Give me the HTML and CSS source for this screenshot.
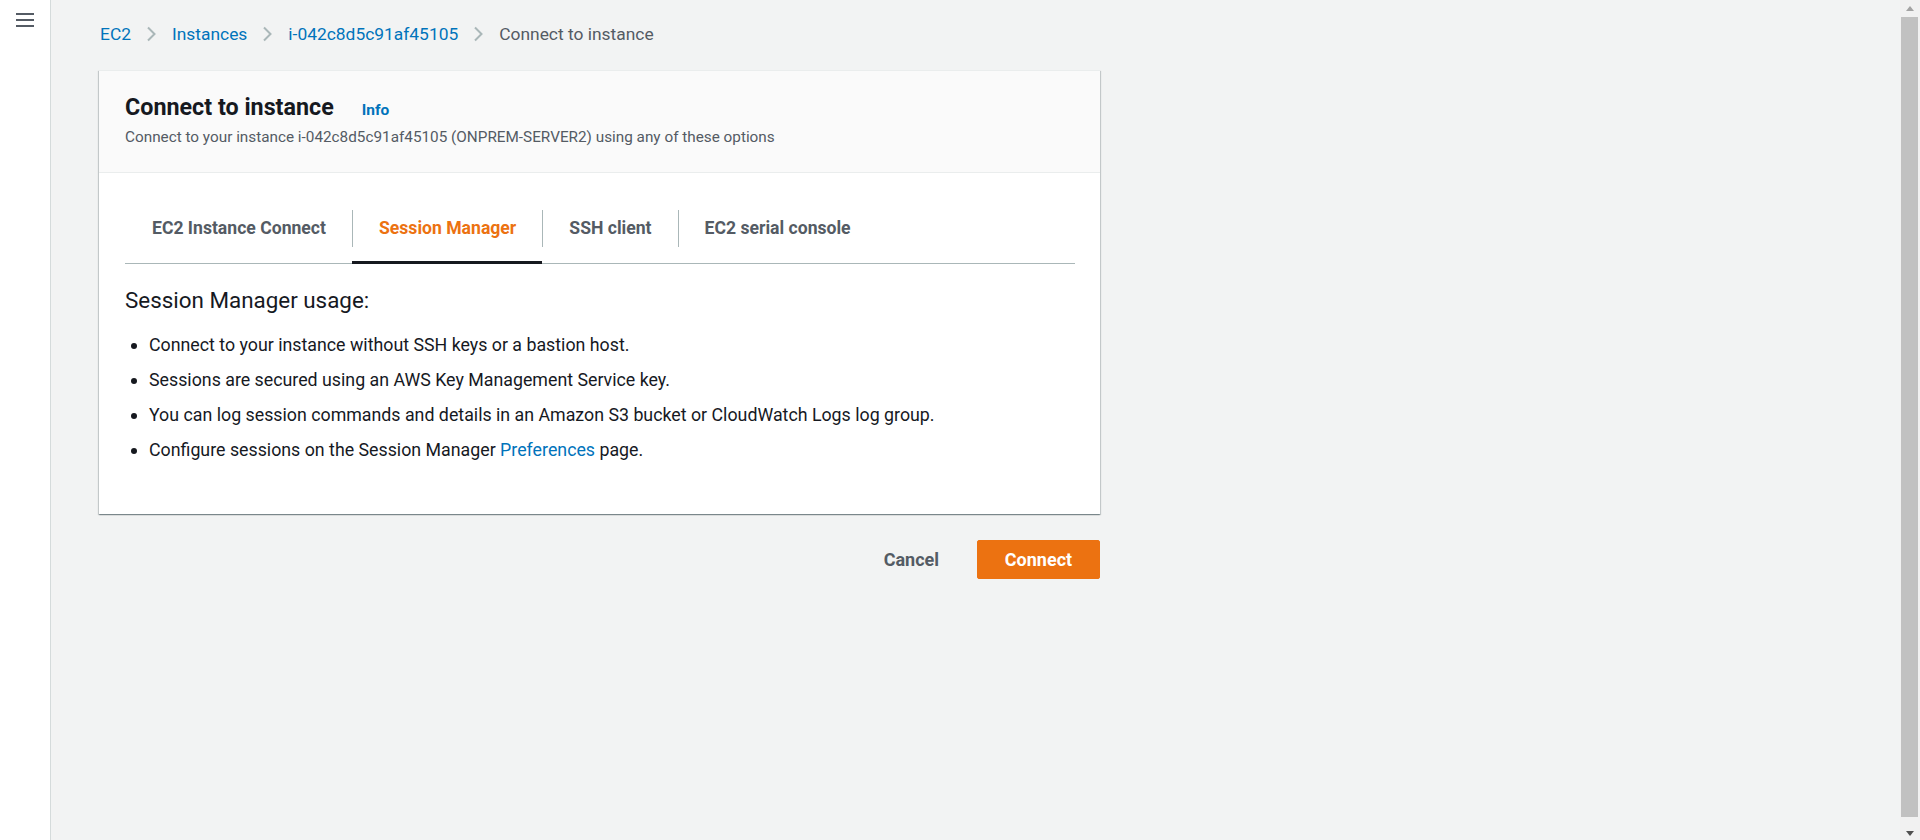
FILE: index.html
```html
<!DOCTYPE html>
<html lang="en">
<head>
<meta charset="utf-8">
<title>Connect to instance | EC2</title>
<link rel="stylesheet" href="styles.css">
</head>
<body>
<div class="app">
  <aside class="sidebar">
    <button class="menu-btn" aria-label="Open navigation">
      <svg width="18" height="16" viewBox="0 0 18 16"><rect x="0" y="1" width="18" height="2"/><rect x="0" y="7" width="18" height="2"/><rect x="0" y="13" width="18" height="2"/></svg>
    </button>
  </aside>
  <main class="main">
    <nav class="breadcrumbs">
      <a class="crumb-link" href="#">EC2</a>
      <svg class="chev" width="11" height="16" viewBox="0 0 11 16"><path d="M2 1.5 L8.5 8 L2 14.5"/></svg>
      <a class="crumb-link" href="#">Instances</a>
      <svg class="chev" width="11" height="16" viewBox="0 0 11 16"><path d="M2 1.5 L8.5 8 L2 14.5"/></svg>
      <a class="crumb-link" href="#">i-042c8d5c91af45105</a>
      <svg class="chev" width="11" height="16" viewBox="0 0 11 16"><path d="M2 1.5 L8.5 8 L2 14.5"/></svg>
      <span class="crumb-current">Connect to instance</span>
    </nav>
    <section class="card">
      <header class="card-header">
        <div class="title-row">
          <h1 class="title">Connect to instance</h1>
          <a class="info" href="#">Info</a>
        </div>
        <p class="subtitle">Connect to your instance i-042c8d5c91af45105 (ONPREM-SERVER2) using any of these options</p>
      </header>
      <div class="card-body">
        <div class="tabs">
          <div class="tab"><span class="tab-label first">EC2 Instance Connect</span></div>
          <div class="tab active"><span class="tab-label">Session Manager</span></div>
          <div class="tab"><span class="tab-label">SSH client</span></div>
          <div class="tab"><span class="tab-label">EC2 serial console</span></div>
        </div>
        <h2 class="usage-title">Session Manager usage:</h2>
        <ul class="usage-list">
          <li>Connect to your instance without SSH keys or a bastion host.</li>
          <li>Sessions are secured using an AWS Key Management Service key.</li>
          <li>You can log session commands and details in an Amazon S3 bucket or CloudWatch Logs log group.</li>
          <li>Configure sessions on the Session Manager <a class="link" href="#">Preferences</a> page.</li>
        </ul>
      </div>
    </section>
    <div class="actions">
      <button class="btn btn-link">Cancel</button>
      <button class="btn btn-primary">Connect</button>
    </div>
  </main>
  <div class="scrollbar">
    <div class="sb-btn"><span class="tri-up"></span></div>
    <div class="sb-track"><div class="sb-thumb"></div></div>
    <div class="sb-btn"><span class="tri-down"></span></div>
  </div>
</div>
</body>
</html>
```
FILE: styles.css
```css
* { box-sizing: border-box; }
html, body { margin: 0; padding: 0; }
body {
  background: #f2f3f3;
  font-family: Roboto, "Liberation Sans", Arial, sans-serif;
  color: #16191f;
  overflow: hidden;
}
.app {
  display: flex;
  height: 840px;
}
.sidebar {
  width: 51px;
  flex: none;
  background: #ffffff;
  border-right: 1px solid #d5dbdb;
  padding: 12px 0 0 16px;
}
.menu-btn {
  border: 0;
  background: none;
  padding: 0;
  display: block;
  fill: #545b64;
  cursor: pointer;
}
.menu-btn svg { display: block; }
.main {
  flex: 1;
  padding: 23px 0 0 48px;
}
.breadcrumbs {
  display: flex;
  align-items: center;
  height: 22px;
  padding-left: 1px;
  font-size: 17.4px;
  line-height: 22px;
}
.crumb-link { color: #0073bb; text-decoration: none; }
.crumb-current { color: #545b64; }
.chev {
  margin: 0 15px;
  fill: none;
  stroke: #aab7b8;
  stroke-width: 2;
}
.card {
  width: 1001px;
  margin-top: 25px;
  background: #ffffff;
  border-top: 1px solid #eaeded;
  box-shadow: 0 1px 1px 0 rgba(0,28,36,.3), 1px 1px 1px 0 rgba(0,28,36,.15), -1px 1px 1px 0 rgba(0,28,36,.15);
}
.card-header {
  background: #fafafa;
  border-bottom: 1px solid #eaeded;
  padding: 21px 26px 25px;
}
.title-row {
  display: flex;
  align-items: baseline;
}
.title {
  margin: 0;
  font-size: 23.3px;
  line-height: 30px;
  font-weight: 700;
  color: #16191f;
}
.info {
  margin-left: 28px;
  font-size: 15.5px;
  font-weight: 700;
  color: #0073bb;
  text-decoration: none;
}
.subtitle {
  margin: 5px 0 0;
  font-size: 15.3px;
  line-height: 20px;
  color: #545b64;
}
.card-body {
  padding: 25px 25px 52px 26px;
}
.tabs {
  display: flex;
  border-bottom: 1px solid #aab7b8;
}
.tab {
  padding: 12px 0 14px;
  border-bottom: 3px solid transparent;
  margin-bottom: -1px;
}
.tab.active { border-bottom-color: #16191f; }
.tab-label {
  display: block;
  padding: 0 26px;
  border-left: 1px solid #aab7b8;
  font-size: 17.6px;
  font-weight: 700;
  line-height: 37px;
  color: #545b64;
}
.tab-label.first { border-left: 0; padding-left: 27px; }
.tab.active .tab-label { color: #ec7211; }
.usage-title {
  margin: 22px 0 0;
  font-size: 22.4px;
  line-height: 28px;
  font-weight: 400;
  color: #16191f;
}
.usage-list {
  margin: 19px 0 0;
  padding-left: 24px;
  font-size: 17.8px;
  line-height: 24px;
  color: #16191f;
}
.usage-list li { margin-bottom: 11px; }
.usage-list li:last-child { margin-bottom: 0; }
.link { color: #0073bb; text-decoration: none; }
.actions {
  width: 1001px;
  display: flex;
  justify-content: flex-end;
  gap: 10px;
  margin-top: 26px;
}
.btn {
  height: 39px;
  padding: 0 27px;
  font-family: inherit;
  font-size: 18px;
  font-weight: 700;
  border-radius: 2px;
  cursor: pointer;
}
.btn-link {
  background: transparent;
  border: 1px solid transparent;
  color: #545b64;
}
.btn-primary {
  background: #ec7211;
  border: 1px solid #ec7211;
  color: #ffffff;
  width: 123px;
  padding: 0;
}
.scrollbar {
  width: 20px;
  flex: none;
  display: flex;
  flex-direction: column;
  background: #f1f1f1;
}
.sb-btn {
  height: 17px;
  flex: none;
  display: flex;
  align-items: center;
  justify-content: center;
}
.tri-up {
  width: 0; height: 0;
  border-left: 4.5px solid transparent;
  border-right: 4.5px solid transparent;
  border-bottom: 5px solid #a3a3a3;
}
.tri-down {
  width: 0; height: 0;
  border-left: 4.5px solid transparent;
  border-right: 4.5px solid transparent;
  border-top: 5px solid #505050;
  margin-top: 4px;
}
.sb-track {
  flex: 1;
  display: flex;
  padding: 0 2px 6px 1px;
}
.sb-thumb {
  flex: 1;
  background: #c1c1c1;
}
```
